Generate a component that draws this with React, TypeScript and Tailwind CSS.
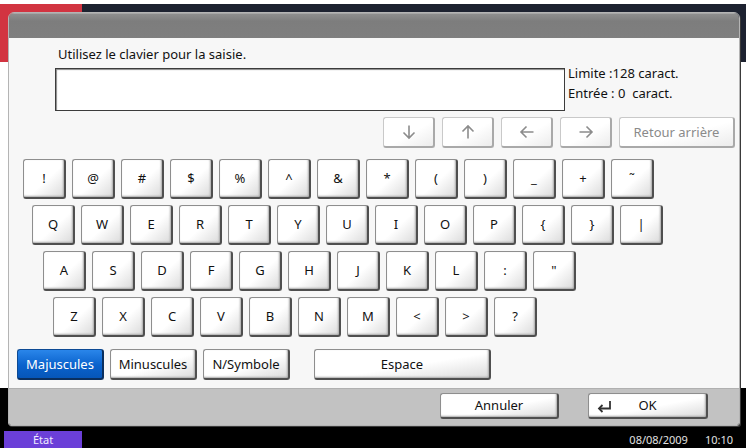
import React from "react";

const row1 = ["!", "@", "#", "$", "%", "^", "&", "*", "(", ")", "_", "+", "˜"];
const row2 = ["Q", "W", "E", "R", "T", "Y", "U", "I", "O", "P", "{", "}", "|"];
const row3 = ["A", "S", "D", "F", "G", "H", "J", "K", "L", ":", "\""];
const row4 = ["Z", "X", "C", "V", "B", "N", "M", "<", ">", "?"];

const keyCls =
  "flex items-center justify-center rounded-[3px] border border-[#8e8e8e] border-r-2 border-b-2 border-r-[#4f4f4f] border-b-[#4f4f4f] bg-[linear-gradient(to_bottom_right,#ffffff_55%,#dadada)] shadow-[inset_-1px_-1px_2px_#a8a8a8] text-[13px] leading-none text-[#111]";

const navCls =
  "flex h-[31px] items-center justify-center rounded-[3px] border border-[#c9c9c9] border-r-2 border-b-2 border-r-[#a9a9a9] border-b-[#a9a9a9] bg-[linear-gradient(to_bottom_right,#ffffff_55%,#ececec)] text-[13px] leading-none text-[#8a8a8a]";

function Key({ label }: { label: string }) {
  return <div className={`${keyCls} h-[40px] w-[43px]`}>{label}</div>;
}

function KeyRow({ keys, offset }: { keys: string[]; offset: string }) {
  return (
    <div className={`flex gap-[6px] ${offset}`}>
      {keys.map((k, i) => (
        <Key key={i} label={k} />
      ))}
    </div>
  );
}

function Arrow({ dir }: { dir: "down" | "up" | "left" | "right" }) {
  const rot = { down: 0, up: 180, left: 90, right: -90 }[dir];
  return (
    <svg width="16" height="16" viewBox="0 0 16 16" style={{ transform: `rotate(${rot}deg)` }}>
      <path d="M8 1.5 V14 M2.5 8.5 L8 14 L13.5 8.5" fill="none" stroke="#8c8c8c" strokeWidth="1.6" />
    </svg>
  );
}

export default function App() {
  return (
    <div className="relative h-[448px] w-[746px] overflow-hidden bg-white font-['Noto_Sans',sans-serif]">
      {/* background screen */}
      <div className="flex h-full flex-col">
        <div className="h-[4px] bg-white" />
        <div className="flex h-[58px] bg-[#1d2230]">
          <div className="w-[82px] bg-[#d23441]" />
        </div>
        <div className="flex-1 bg-white" />
        <div className="flex h-[60px] items-end bg-black">
          <div className="flex h-[17px] w-full items-center">
            <div className="ml-[4px] flex h-[17px] w-[78px] items-center justify-center bg-[#6b3fd8] text-[11px] leading-none text-[#efeaff]">
              État
            </div>
            <div className="ml-auto mr-[13px] flex gap-[17px] text-[11px] leading-none text-[#e2e2e2]">
              <span>08/08/2009</span>
              <span>10:10</span>
            </div>
          </div>
        </div>
      </div>

      {/* dialog window */}
      <div className="absolute left-[8px] top-[12px] flex h-[414px] w-[732px] flex-col overflow-hidden rounded-t-[6px] rounded-b-[3px] border border-[#b4b4b4] shadow-[1px_1px_0_#3a3a3a]">
        <div className="h-[25px] border-t border-[#a6a6a6] bg-[linear-gradient(to_bottom,#8e8e8e,#7d7d7d_30%,#7f7f7f)]" />
        <div className="flex h-[350px] flex-col bg-[#f7f7f7]">
          <div className="ml-[49px] mt-[8px] h-[16px] text-[13px] leading-[16px] text-[#111]">
            Utilisez le clavier pour la saisie.
          </div>
          <div className="ml-[46px] mt-[1px] flex">
            <div className="mt-[5px] h-[43px] w-[510px] border border-[#3c3c3c] bg-white shadow-[inset_1px_1px_1px_#8a8a8a]" />
            <div className="ml-[3px] whitespace-pre text-[13px] leading-[20px] text-[#111]">
              <div>Limite :128 caract.</div>
              <div>Entrée : 0  caract.</div>
            </div>
          </div>
          <div className="mr-[4px] mt-[6px] flex justify-end gap-[7px]">
            <div className={`${navCls} w-[52px]`}>
              <Arrow dir="down" />
            </div>
            <div className={`${navCls} w-[52px]`}>
              <Arrow dir="up" />
            </div>
            <div className={`${navCls} w-[52px]`}>
              <Arrow dir="left" />
            </div>
            <div className={`${navCls} w-[52px]`}>
              <Arrow dir="right" />
            </div>
            <div className={`${navCls} w-[116px]`}>Retour arrière</div>
          </div>
          <div className="mt-[11px] flex flex-col gap-[6px]">
            <KeyRow keys={row1} offset="ml-[14px]" />
            <KeyRow keys={row2} offset="ml-[23px]" />
            <KeyRow keys={row3} offset="ml-[34px]" />
            <KeyRow keys={row4} offset="ml-[44px]" />
          </div>
          <div className="ml-[8px] mt-[12px] flex gap-[6px]">
            <div className="flex h-[31px] w-[87px] items-center justify-center rounded-[3px] border border-[#0d4a94] border-r-2 border-b-2 border-r-[#0a2f5e] border-b-[#0a2f5e] bg-[linear-gradient(to_bottom,#2a86ea,#0a62cc_55%,#0656b8)] text-[13px] leading-none text-white">
              Majuscules
            </div>
            <div className={`${keyCls} h-[31px] w-[87px]`}>Minuscules</div>
            <div className={`${keyCls} h-[31px] w-[87px]`}>N/Symbole</div>
            <div className={`${keyCls} ml-[18px] h-[31px] w-[177px]`}>Espace</div>
          </div>
        </div>
        <div className="flex flex-1 items-start justify-end border-t border-[#b0b0b0] bg-[#c2c2c2] pr-[31px] pt-[4px]">
          <div className={`${keyCls} h-[26px] w-[119px] border-[#6a6a6a] border-r-[#3a3a3a] border-b-[#3a3a3a]`}>
            Annuler
          </div>
          <div className={`${keyCls} relative ml-[29px] h-[26px] w-[120px] border-[#6a6a6a] border-r-[#3a3a3a] border-b-[#3a3a3a]`}>
            <svg className="absolute left-[7px] top-[6px]" width="17" height="13" viewBox="0 0 17 13">
              <path d="M14 1 V8.5 H3" fill="none" stroke="#333" strokeWidth="1.8" />
              <path d="M6.5 5 L3 8.5 L6.5 12" fill="none" stroke="#333" strokeWidth="1.8" />
            </svg>
            OK
          </div>
        </div>
      </div>
    </div>
  );
}
